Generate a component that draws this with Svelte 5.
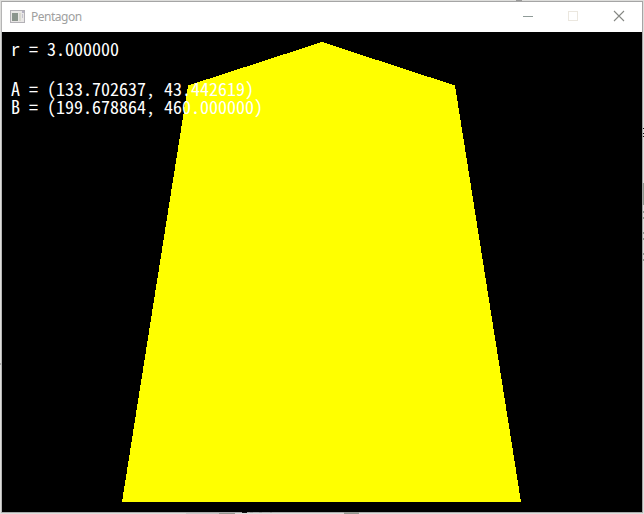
<script>
  const radius = 'r = 3.000000';
  const points = ['A = (133.702637, 43.442619)', 'B = (199.678864, 460.000000)'];
</script>

<main class="desktop">
  <section class="window">
    <header class="titlebar">
      <svg class="app-icon" width="15" height="13" viewBox="0 0 15 13" shape-rendering="crispEdges">
        <rect width="15" height="13" fill="#b3b1b6" />
        <rect x="1" y="1" width="13" height="11" fill="#e9e7e6" />
        <rect x="2" y="3" width="6" height="8" fill="#8b958d" />
        <rect x="9" y="3" width="2" height="8" fill="#d9d9d0" />
        <rect x="12" y="1" width="2" height="2" fill="#b5b2c2" />
        <rect x="12" y="4" width="1" height="4" fill="#c5c4ce" />
      </svg>
      <h1>Pentagon</h1>
      <div class="controls">
        <svg width="46" height="30" viewBox="0 0 46 30"><path d="M18 14.5h10" stroke="#8f9b98" /></svg>
        <svg width="45" height="30" viewBox="0 0 45 30"><rect x="17.5" y="9.5" width="9" height="9" fill="none" stroke="#ebe7df" /></svg>
        <svg width="46" height="30" viewBox="0 0 46 30"><path d="M18 9l10 10M28 9L18 19" stroke="#868884" stroke-width="1.1" /></svg>
      </div>
    </header>
    <div class="canvas">
      <svg class="shape" width="640" height="480" viewBox="0 0 640 480" shape-rendering="crispEdges">
        <polygon points="320,10 453,53.5 519,470 120,470 186,53.5" fill="#ff0" />
      </svg>
      <div class="readout">
        <pre class="radius">{radius}</pre>
        <pre>{points.join('\n')}</pre>
      </div>
    </div>
  </section>
  <svg class="edge" width="644" height="514" viewBox="0 0 644 514" shape-rendering="crispEdges">
    <path d="M186 513h34v1h-34z" fill="#c9c9c9" />
    <path d="M219 513h16v1h-16zM344 512h15v2h-15z" fill="#969a93" />
    <path d="M242 512h5v1h-5z" fill="#111" />
    <path d="M250 512h3v1h-3zM259 512h3v1h-3zM270 512h2v1h-2z" fill="#999" />
    <path d="M516 0h6v1h-6z" fill="#999" />
    <path d="M643 128h1v1h-1zM643 133h1v1h-1zM643 136h1v1h-1z" fill="#111" />
    <path d="M643 183h1v22h-1zM643 211h1v2h-1zM643 217h1v2h-1zM643 232h1v2h-1zM643 238h1v2h-1zM643 253h1v2h-1zM643 259h1v2h-1z" fill="#8f9990" />
    <path d="M0 363h1v2h-1z" fill="#aaa" />
  </svg>
</main>

<style>
  :global(body) { margin: 0; overflow: hidden; }
  .desktop { position: relative; box-sizing: border-box; width: 644px; height: 514px; padding: 1px; background: #dededc; }
  .window { box-sizing: border-box; width: 642px; height: 512px; border: 1px solid #a5a5a5; border-left-color: #b5b5b5; border-bottom-color: #aaa; background: #fff; }
  .titlebar { display: flex; align-items: center; height: 30px; padding-left: 8px; background: #fff; }
  .app-icon { flex: none; margin-bottom: 2px; }
  h1 { margin: 0 0 0 6px; font: 400 12px/16px "Noto Sans", sans-serif; letter-spacing: -0.5px; color: #a0a0a0; }
  .controls { display: flex; margin-left: auto; }
  .controls svg { display: block; }
  .canvas { position: relative; height: 480px; background: #000; }
  .shape { display: block; }
  .readout { position: absolute; top: 7px; left: 9px; color: #fff; }
  pre { margin: 0; font: 400 18px/18px "Noto Sans Mono CJK JP", "Liberation Mono", monospace; }
  .radius { margin-bottom: 22px; }
  .edge { position: absolute; inset: 0; pointer-events: none; }
</style>
